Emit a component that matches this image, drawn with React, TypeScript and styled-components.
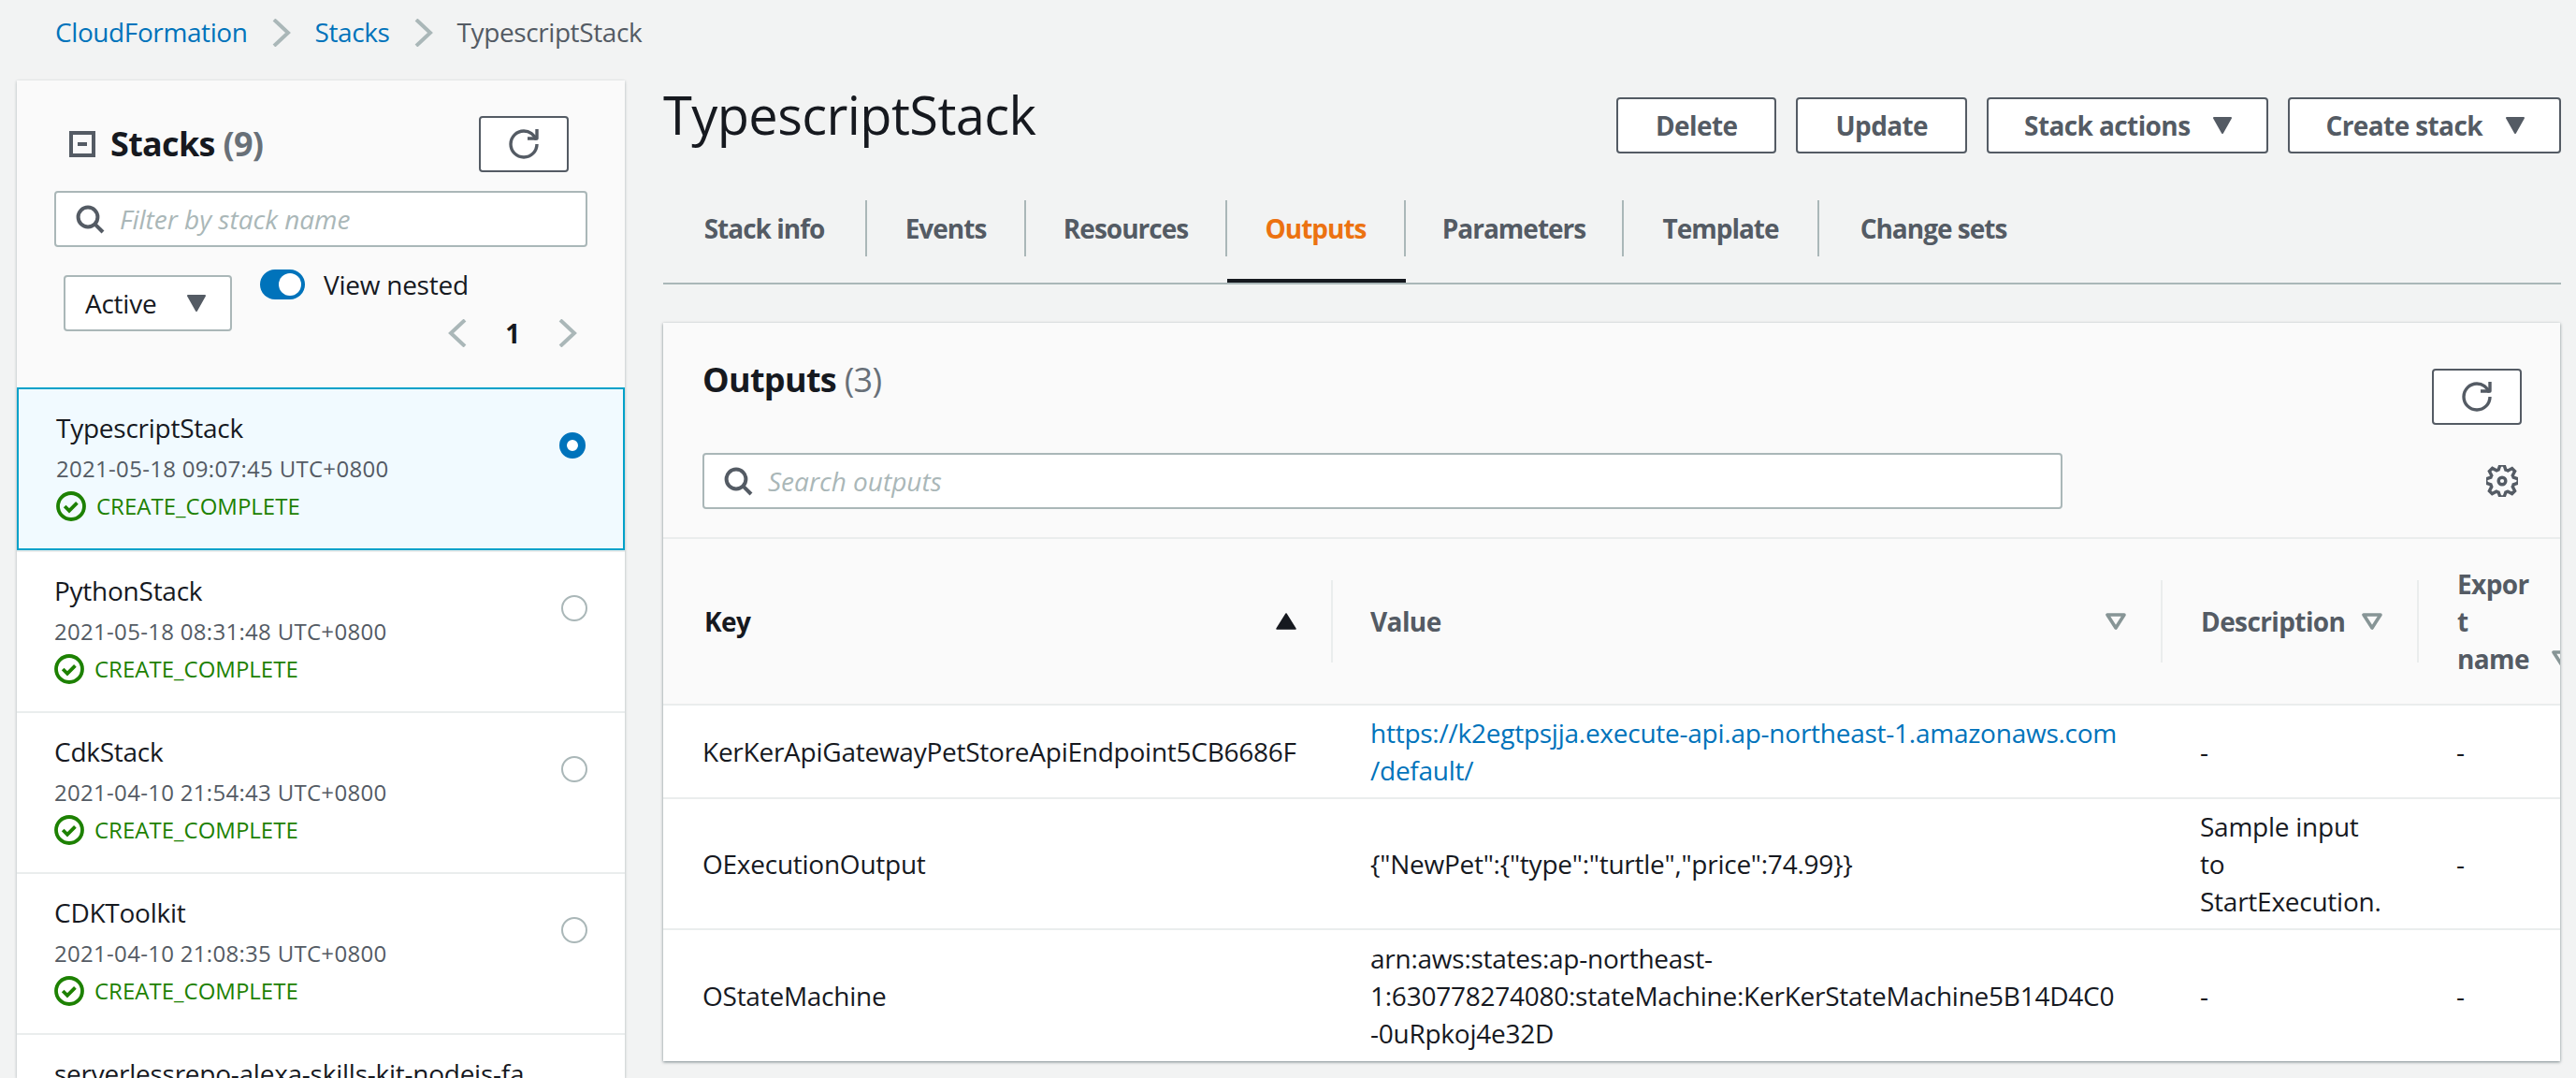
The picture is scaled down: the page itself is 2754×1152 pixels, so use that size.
import React from 'react';
import styled, { createGlobalStyle } from 'styled-components';

const stacks = [
  { name: 'TypescriptStack', date: '2021-05-18 09:07:45 UTC+0800' },
  { name: 'PythonStack', date: '2021-05-18 08:31:48 UTC+0800' },
  { name: 'CdkStack', date: '2021-04-10 21:54:43 UTC+0800' },
  { name: 'CDKToolkit', date: '2021-04-10 21:08:35 UTC+0800' },
  { name: 'serverlessrepo-alexa-skills-kit-nodejs-fa', date: '2021-04-02 10:12:21 UTC+0800' },
];

const tabs = [
  { label: 'Stack info', width: 218 },
  { label: 'Events', width: 170 },
  { label: 'Resources', width: 215 },
  { label: 'Outputs', width: 191 },
  { label: 'Parameters', width: 233 },
  { label: 'Template', width: 209 },
  { label: 'Change sets', width: 244 },
];

function RefreshIcon() {
  return (
    <svg width="32" height="32" viewBox="0 0 16 16" fill="none" stroke="#545b64" strokeWidth="1.7">
      <path d="M10 5h5V0" strokeLinejoin="round" />
      <path d="M15 8a6.99 6.99 0 0 1-7 7 6.99 6.99 0 0 1-7-7 6.99 6.99 0 0 1 7-7 6.98 6.98 0 0 1 6.64 4.77" />
    </svg>
  );
}

function SearchIcon() {
  return (
    <svg width="32" height="32" viewBox="0 0 16 16" fill="none" stroke="#545b64" strokeWidth="2">
      <circle cx="7" cy="7" r="5.2" />
      <path d="M15 15l-4.35-4.35" />
    </svg>
  );
}

function GearIcon() {
  return (
    <svg width="34" height="34" viewBox="0 0 16 16" fill="none" stroke="#545b64" strokeWidth="1.6">
      <path d="M13.3 5.2l1.1-2.1L13 1.7l-2.1 1.1c-.3-.2-.7-.3-1.1-.4L9 0H7l-.8 2.3c-.3.1-.7.2-1 .4L3.1 1.6 1.6 3.1l1.1 2.1c-.2.3-.3.7-.4 1L0 7v2l2.3.8c.1.4.3.7.4 1.1l-1.1 2.1 1.4 1.4 2.1-1.1c.3.2.7.3 1.1.4L7 16h2l.8-2.3c.4-.1.7-.3 1.1-.4l2.1 1.1 1.4-1.4-1.1-2.1c.2-.3.3-.7.4-1.1L16 9V7l-2.3-.8c-.1-.3-.2-.7-.4-1z" />
      <circle cx="8" cy="8" r="1.8" />
    </svg>
  );
}

function StatusIcon() {
  return (
    <svg width="32" height="32" viewBox="0 0 16 16" fill="none" stroke="#1d8102" strokeWidth="1.9">
      <circle cx="8" cy="8" r="7" />
      <path d="M4.6 8l2.4 2.4 4.2-4.2" />
    </svg>
  );
}

function Chevron({ dir = 'right', color = '#aab7b8' }: { dir?: 'left' | 'right'; color?: string }) {
  return (
    <svg width="20" height="30" viewBox="0 0 20 30" fill="none" stroke={color} strokeWidth="4">
      <path d={dir === 'right' ? 'M2 1l15 14L2 29' : 'M18 1L3 15l15 14'} />
    </svg>
  );
}

function CaretDown() {
  return (
    <svg width="22" height="18" viewBox="0 0 22 18" fill="#545b64">
      <path d="M2 1h18L11 17z" stroke="#545b64" strokeWidth="2" strokeLinejoin="round" />
    </svg>
  );
}

function SortAsc() {
  return (
    <svg width="22" height="18" viewBox="0 0 22 18" fill="#16191f">
      <path d="M11 1L21 17H1z" stroke="#16191f" strokeWidth="1.5" strokeLinejoin="round" />
    </svg>
  );
}

function SortNone() {
  return (
    <svg width="22" height="18" viewBox="0 0 22 18" fill="none">
      <path d="M2 2h18L11 16z" stroke="#879596" strokeWidth="3.6" strokeLinejoin="round" />
    </svg>
  );
}

function CollapseIcon() {
  return (
    <svg width="28" height="28" viewBox="0 0 28 28" fill="none" stroke="#545b64" strokeWidth="4">
      <rect x="2" y="2" width="24" height="24" />
      <path d="M9 14h10" />
    </svg>
  );
}

export default function App() {
  return (
    <Page>
      <GlobalStyle />
      <Breadcrumbs>
        <CrumbLink>CloudFormation</CrumbLink>
        <Chevron />
        <CrumbLink>Stacks</CrumbLink>
        <Chevron />
        <CrumbCurrent>TypescriptStack</CrumbCurrent>
      </Breadcrumbs>
      <Columns>
        <Sidebar>
          <SidebarHeader>
            <SidebarTitleRow>
              <SidebarTitle>
                <CollapseIcon />
                <TitleText>
                  Stacks <Count>(9)</Count>
                </TitleText>
              </SidebarTitle>
              <IconButton>
                <RefreshIcon />
              </IconButton>
            </SidebarTitleRow>
            <FilterInput>
              <SearchIcon />
              <Placeholder>Filter by stack name</Placeholder>
            </FilterInput>
            <FilterControls>
              <SelectBox>
                Active
                <CaretDown />
              </SelectBox>
              <FilterRight>
                <ToggleRow>
                  <Toggle>
                    <Knob />
                  </Toggle>
                  View nested
                </ToggleRow>
                <Pager>
                  <Chevron dir="left" />
                  <PageNumber>1</PageNumber>
                  <Chevron />
                </Pager>
              </FilterRight>
            </FilterControls>
          </SidebarHeader>
          {stacks.map((stack, index) => (
            <StackItem key={stack.name} $selected={index === 0}>
              <StackText>
                <StackName>{stack.name}</StackName>
                <StackDate>{stack.date}</StackDate>
                <StackStatus>
                  <StatusIcon />
                  CREATE_COMPLETE
                </StackStatus>
              </StackText>
              <Radio $selected={index === 0} />
            </StackItem>
          ))}
        </Sidebar>
        <Main>
          <HeaderRow>
            <PageTitle>TypescriptStack</PageTitle>
            <Actions>
              <ActionButton>Delete</ActionButton>
              <ActionButton>Update</ActionButton>
              <ActionButton>
                Stack actions
                <CaretDown />
              </ActionButton>
              <ActionButton>
                Create stack
                <CaretDown />
              </ActionButton>
            </Actions>
          </HeaderRow>
          <TabBar>
            {tabs.map((tab) => (
              <Tab key={tab.label} $active={tab.label === 'Outputs'} $width={tab.width}>
                <TabLabel $active={tab.label === 'Outputs'}>{tab.label}</TabLabel>
              </Tab>
            ))}
          </TabBar>
          <Panel>
            <PanelHeader>
              <PanelTitleRow>
                <PanelTitle>
                  Outputs <PanelCount>(3)</PanelCount>
                </PanelTitle>
                <PanelRefresh>
                  <RefreshIcon />
                </PanelRefresh>
              </PanelTitleRow>
              <SearchRow>
                <SearchInput>
                  <SearchIcon />
                  <Placeholder>Search outputs</Placeholder>
                </SearchInput>
                <GearWrap>
                  <GearIcon />
                </GearWrap>
              </SearchRow>
            </PanelHeader>
            <Table>
              <colgroup>
                <col width="716" />
                <col width="887" />
                <col width="274" />
                <col width="151" />
              </colgroup>
              <thead>
                <tr>
                  <Th>
                    <ThInner $pad={44}>
                      <SortedLabel>Key</SortedLabel>
                      <SortAsc />
                    </ThInner>
                  </Th>
                  <Th>
                    <ThInner $pad={40}>
                      Value
                      <SortNone />
                    </ThInner>
                  </Th>
                  <Th>
                    <ThInner $pad={41}>
                      Description
                      <SortNone />
                    </ThInner>
                  </Th>
                  <Th>
                    <ExportInner>
                      <span>
                        Expor
                        <br />t
                        <br />
                        name
                      </span>
                      <ExportCaret>
                        <SortNone />
                      </ExportCaret>
                    </ExportInner>
                  </Th>
                </tr>
              </thead>
              <tbody>
                <Row $height={100}>
                  <KeyCell>KerKerApiGatewayPetStoreApiEndpoint5CB6686F</KeyCell>
                  <Td>
                    <Link>
                      https://k2egtpsjja.execute-api.ap-northeast-1.amazonaws.com
                      <br />
                      /default/
                    </Link>
                  </Td>
                  <Td>-</Td>
                  <Td>-</Td>
                </Row>
                <Row $height={140}>
                  <KeyCell>OExecutionOutput</KeyCell>
                  <Td>{'{"NewPet":{"type":"turtle","price":74.99}}'}</Td>
                  <Td>
                    Sample input
                    <br />
                    to
                    <br />
                    StartExecution.
                  </Td>
                  <Td>-</Td>
                </Row>
                <Row $height={141}>
                  <KeyCell>OStateMachine</KeyCell>
                  <Td>
                    arn:aws:states:ap-northeast-
                    <br />
                    1:630778274080:stateMachine:KerKerStateMachine5B14D4C0
                    <br />
                    -0uRpkoj4e32D
                  </Td>
                  <Td>-</Td>
                  <Td>-</Td>
                </Row>
              </tbody>
            </Table>
          </Panel>
        </Main>
      </Columns>
    </Page>
  );
}

const GlobalStyle = createGlobalStyle`
  html, body {
    margin: 0;
    padding: 0;
    background: #f2f3f3;
  }
  * {
    box-sizing: border-box;
  }
`;

const Page = styled.div`
  width: 2754px;
  height: 1152px;
  overflow: hidden;
  background: #f2f3f3;
  color: #16191f;
  font-family: 'Open Sans', 'Liberation Sans', sans-serif;
  font-size: 28px;
  line-height: 40px;
  letter-spacing: -0.25px;
`;

const Breadcrumbs = styled.div`
  height: 86px;
  padding: 14px 0 0 59px;
  display: flex;
  align-items: flex-start;
  gap: 26px;
  letter-spacing: -0.4px;
  svg {
    margin-top: 6px;
  }
`;

const CrumbLink = styled.span`
  color: #0073bb;
`;

const CrumbCurrent = styled.span`
  color: #545b64;
`;

const Columns = styled.div`
  display: flex;
  padding-left: 18px;
  gap: 41px;
`;

const Sidebar = styled.aside`
  width: 650px;
  flex: none;
  height: 1066px;
  overflow: hidden;
  background: #fafafa;
  box-shadow: 0 1px 3px rgba(0, 28, 36, 0.3);
`;

const SidebarHeader = styled.div`
  height: 328px;
  padding: 38px 40px 0;
`;

const SidebarTitleRow = styled.div`
  display: flex;
  justify-content: space-between;
  padding: 0 20px 0 16px;
`;

const SidebarTitle = styled.div`
  display: flex;
  align-items: center;
  gap: 16px;
`;

const TitleText = styled.h2`
  margin: 0;
  font-size: 36px;
  font-weight: 700;
  letter-spacing: -0.7px;
`;

const Count = styled.span`
  color: #687078;
`;

const IconButton = styled.div`
  width: 96px;
  height: 60px;
  display: flex;
  align-items: center;
  justify-content: center;
  background: #fff;
  border: 2px solid #545b64;
  border-radius: 4px;
`;

const FilterInput = styled.div`
  margin-top: 20px;
  height: 60px;
  display: flex;
  align-items: center;
  gap: 16px;
  padding-left: 20px;
  background: #fff;
  border: 2px solid #aab7b8;
  border-radius: 4px;
`;

const Placeholder = styled.span`
  font-style: italic;
  color: #aab7b8;
  letter-spacing: 0;
`;

const FilterControls = styled.div`
  margin-top: 24px;
  display: flex;
  padding-left: 10px;
  gap: 30px;
  align-items: flex-start;
`;

const SelectBox = styled.div`
  margin-top: 6px;
  width: 180px;
  height: 60px;
  display: flex;
  align-items: center;
  justify-content: space-between;
  padding: 0 25px 0 21px;
  background: #fff;
  border: 2px solid #aab7b8;
  border-radius: 4px;
`;

const FilterRight = styled.div`
  flex: 1;
  display: flex;
  flex-direction: column;
  gap: 16px;
`;

const ToggleRow = styled.div`
  height: 32px;
  display: flex;
  align-items: center;
  gap: 20px;
`;

const Toggle = styled.div`
  width: 48px;
  height: 32px;
  border-radius: 16px;
  background: #0073bb;
  display: flex;
  justify-content: flex-end;
  align-items: center;
  padding-right: 4px;
`;

const Knob = styled.div`
  width: 24px;
  height: 24px;
  border-radius: 50%;
  background: #fff;
`;

const Pager = styled.div`
  display: flex;
  align-items: center;
  justify-content: flex-end;
  gap: 41px;
  padding-right: 11px;
`;

const PageNumber = styled.span`
  font-weight: 700;
`;

const StackItem = styled.div<{ $selected: boolean }>`
  height: ${(p) => (p.$selected ? '174px' : '172px')};
  display: flex;
  justify-content: space-between;
  padding: 21px 40px 0;
  background: ${(p) => (p.$selected ? '#f1faff' : '#fff')};
  border: ${(p) => (p.$selected ? '2px solid #00a1c9' : 'none')};
  border-top: ${(p) => (p.$selected ? '2px solid #00a1c9' : '2px solid #eaeded')};
`;

const StackText = styled.div`
  display: flex;
  flex-direction: column;
  gap: 8px;
  white-space: nowrap;
  min-width: 0;
`;

const StackName = styled.div`
  height: 40px;
`;

const StackDate = styled.div`
  font-size: 24px;
  line-height: 32px;
  color: #545b64;
  letter-spacing: 0.3px;
`;

const StackStatus = styled.div`
  display: flex;
  align-items: center;
  gap: 11px;
  font-size: 24px;
  line-height: 32px;
  color: #1d8102;
  letter-spacing: 0;
`;

const Radio = styled.div<{ $selected: boolean }>`
  flex: none;
  width: 28px;
  height: 28px;
  margin-top: 25px;
  border-radius: 50%;
  background: #fff;
  border: ${(p) => (p.$selected ? '8px solid #0073bb' : '2px solid #aab7b8')};
`;

const Main = styled.main`
  width: 2029px;
  flex: none;
`;

const HeaderRow = styled.div`
  height: 128px;
  display: flex;
  justify-content: space-between;
  align-items: flex-start;
  padding-top: 18px;
`;

const PageTitle = styled.h1`
  margin: -18px 0 0;
  font-size: 56px;
  line-height: 72px;
  font-weight: 400;
  letter-spacing: -0.6px;
`;

const Actions = styled.div`
  display: flex;
  gap: 21px;
`;

const ActionButton = styled.div`
  height: 60px;
  display: flex;
  align-items: center;
  gap: 24px;
  padding: 0 40px;
  background: #fff;
  border: 2px solid #545b64;
  border-radius: 4px;
  color: #545b64;
  font-weight: 700;
  letter-spacing: -0.6px;
  &:has(svg) {
    padding: 0 36px 0 38px;
  }
`;

const TabBar = styled.div`
  display: flex;
  height: 90px;
  border-bottom: 2px solid #aab7b8;
`;

const Tab = styled.div<{ $active: boolean; $width: number }>`
  width: ${(p) => p.$width}px;
  height: 88px;
  border-bottom: 4px solid ${(p) => (p.$active ? '#16191f' : 'transparent')};
`;

const TabLabel = styled.div<{ $active: boolean }>`
  height: 60px;
  line-height: 60px;
  text-align: center;
  font-weight: 700;
  letter-spacing: -1px;
  color: ${(p) => (p.$active ? '#ec7211' : '#545b64')};
  border-right: 2px solid #aab7b8;
  ${Tab}:last-child & {
    border-right: none;
  }
`;

const Panel = styled.section`
  margin-top: 41px;
  width: 2028px;
  height: 789px;
  overflow: hidden;
  background: #fafafa;
  box-shadow: 0 1px 3px rgba(0, 28, 36, 0.5);
`;

const PanelHeader = styled.div`
  height: 231px;
  padding: 38px 41px 0 42px;
  border-bottom: 2px solid #eaeded;
`;

const PanelTitleRow = styled.div`
  display: flex;
  justify-content: space-between;
  align-items: flex-start;
`;

const PanelTitle = styled.h2`
  margin: 0;
  font-size: 36px;
  line-height: 46px;
  font-weight: 700;
  letter-spacing: -0.7px;
`;

const PanelCount = styled.span`
  font-weight: 400;
  color: #687078;
`;

const PanelRefresh = styled(IconButton)`
  margin-top: 11px;
`;

const SearchRow = styled.div`
  margin-top: 30px;
  display: flex;
  justify-content: space-between;
  align-items: center;
`;

const SearchInput = styled(FilterInput)`
  margin-top: 0;
  width: 1454px;
`;

const GearWrap = styled.div`
  width: 36px;
  display: flex;
  margin-right: 2px;
`;

const Table = styled.table`
  width: 2028px;
  table-layout: fixed;
  border-collapse: collapse;
`;

const Th = styled.th`
  height: 177px;
  padding: 0;
  background: #fafafa;
  text-align: left;
  font-weight: 700;
  letter-spacing: -0.6px;
  color: #545b64;
  vertical-align: middle;
`;

const ThInner = styled.div<{ $pad: number }>`
  height: 88px;
  display: flex;
  align-items: center;
  justify-content: space-between;
  padding: 0 37px 0 ${(p) => p.$pad}px;
  border-right: 2px solid #eaeded;
`;

const SortedLabel = styled.span`
  color: #16191f;
`;

const ExportInner = styled.div`
  display: flex;
  padding-left: 41px;
  align-items: flex-end;
`;

const ExportCaret = styled.div`
  flex: none;
  height: 40px;
  display: flex;
  align-items: center;
  margin-left: 24px;
`;

const Row = styled.tr<{ $height: number }>`
  height: ${(p) => p.$height}px;
  background: #fff;
  border-top: 2px solid #eaeded;
`;

const Td = styled.td`
  padding: 0 0 0 40px;
  white-space: nowrap;
  vertical-align: middle;
`;

const KeyCell = styled(Td)`
  padding-left: 42px;
`;

const Link = styled.span`
  color: #0073bb;
`;
